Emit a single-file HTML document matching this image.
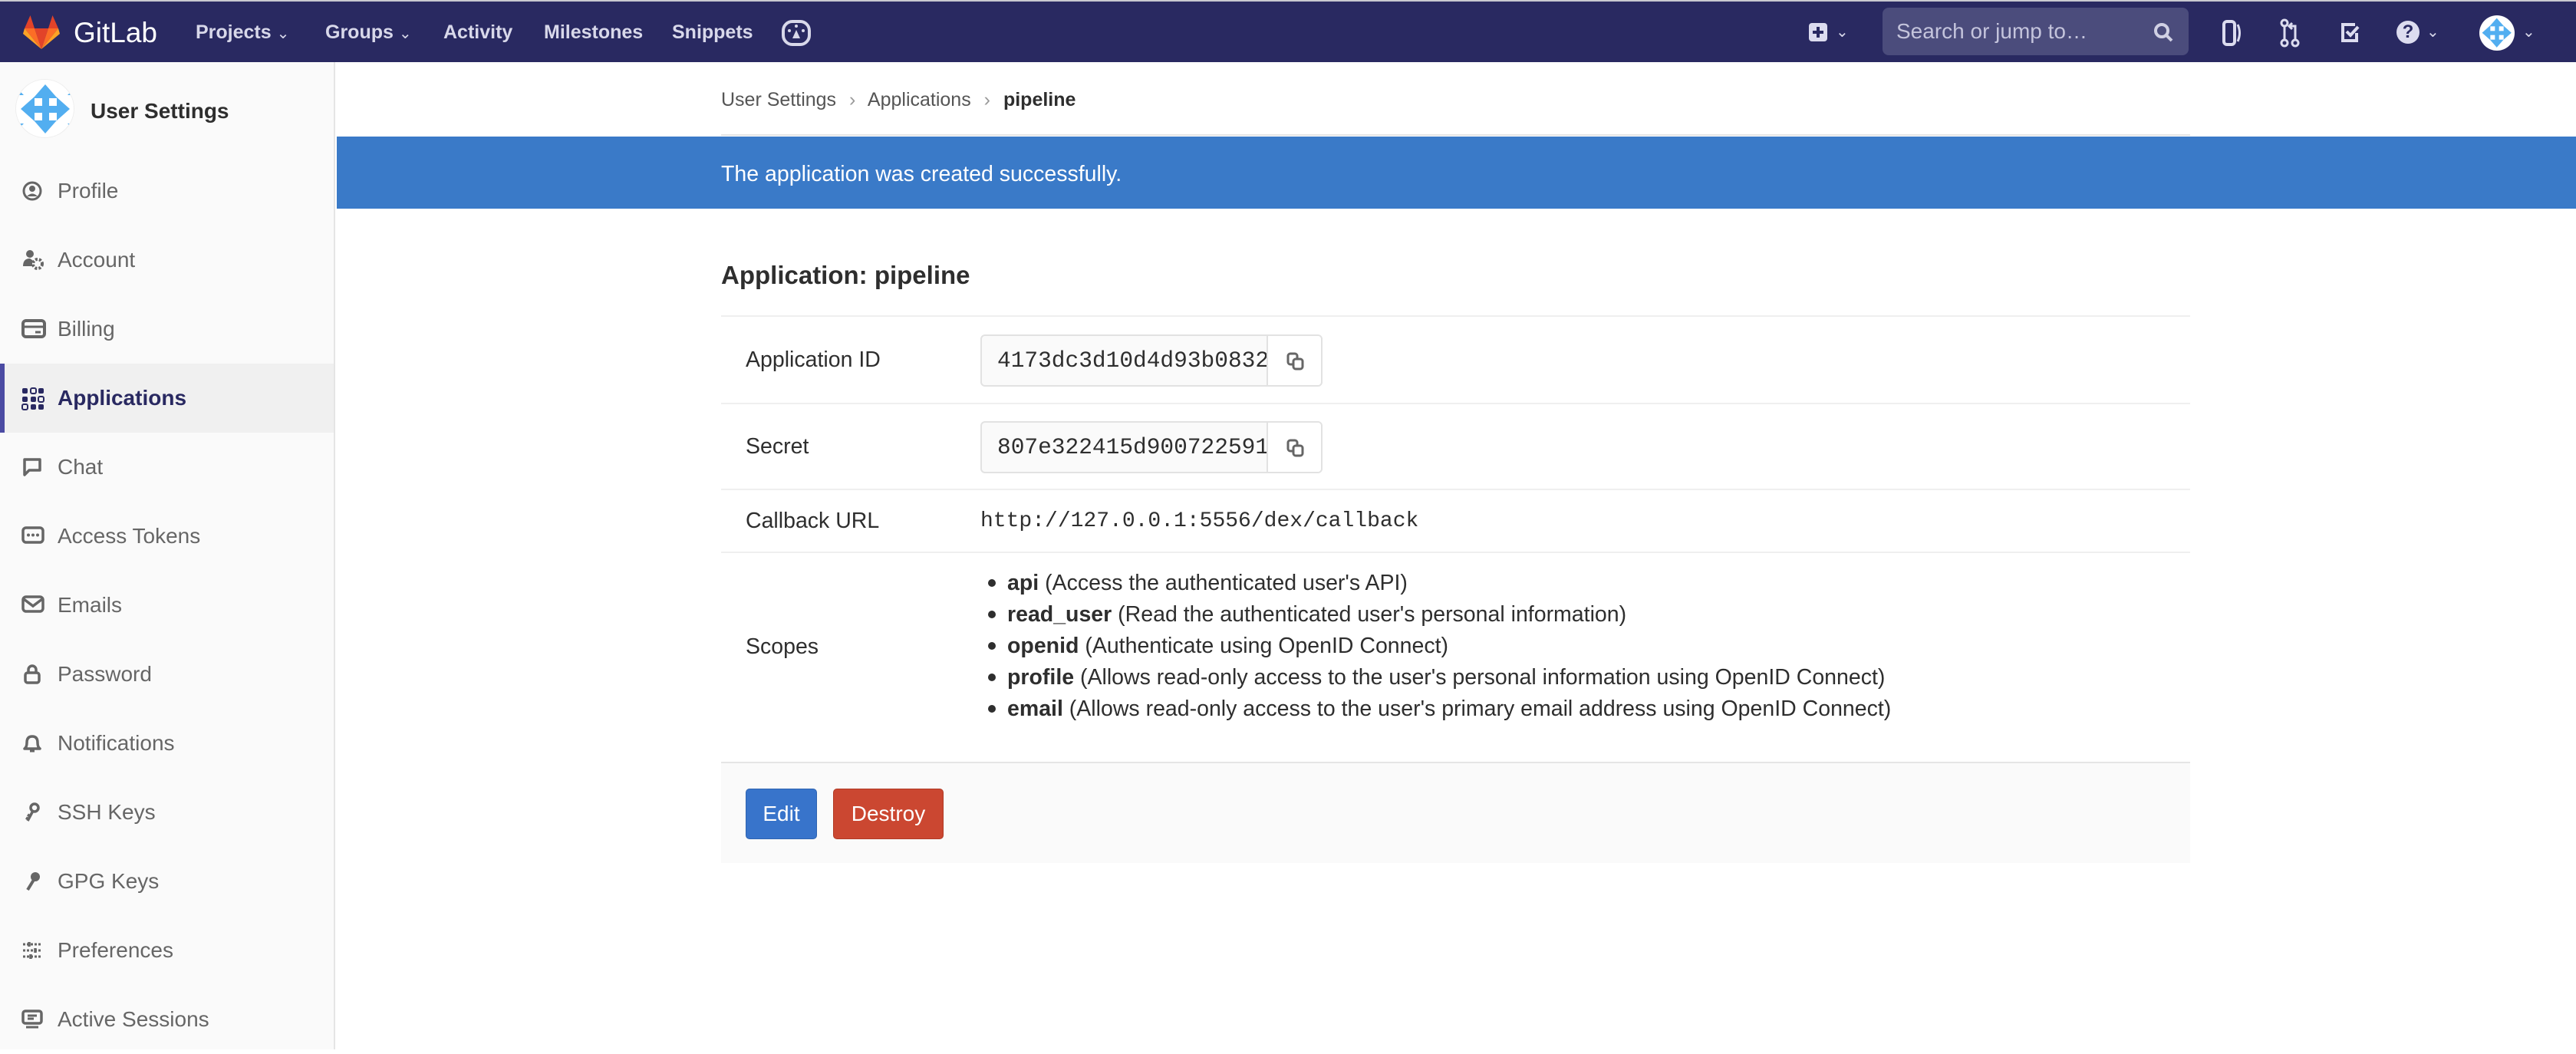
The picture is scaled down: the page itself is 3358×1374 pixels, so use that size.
<!DOCTYPE html>
<html><head><meta charset="utf-8"><style>
*{box-sizing:border-box;margin:0;padding:0}
body{width:3358px;height:1368px;overflow:hidden;background:#fff;font-family:"Liberation Sans",sans-serif;color:#2e2e2e;position:relative}
.abs{position:absolute}
.nav{left:0;top:0;width:3358px;height:81px;background:#292961;border-top:2px solid #c8c8d0}
.nl{position:absolute;top:0;height:81px;line-height:81px;color:#d8d8ea;font-weight:bold;font-size:25px}
.side{left:0;top:81px;width:437px;height:1287px;background:#fafafa;border-right:2px solid #e5e5e5}
.si{position:absolute;left:0;width:435px;height:90px;line-height:90px;font-size:28px;color:#666}
.si span{position:absolute;left:75px}
.si svg{position:absolute;left:28px;top:31px}
.si.act{background:#f0f0f0;color:#292961;font-weight:bold;border-left:6px solid #4b4ba3}
.si.act svg{left:22px}.si.act span{left:69px}
.row{position:absolute;left:940px;width:1915px;border-top:2px solid #efefef}
.lbl{position:absolute;left:32px;font-size:28.5px}
.inp{position:absolute;left:338px;width:446px;height:68px;border:2px solid #e2e2e2;border-radius:6px;background:#fafafa;overflow:hidden}
.inp .t{position:absolute;left:20px;top:0;line-height:64px;font-family:"Liberation Mono",monospace;font-size:29.5px;width:351px;overflow:hidden;white-space:nowrap}
.inp .b{position:absolute;left:371px;top:0;width:73px;height:64px;border-left:2px solid #e2e2e2;background:#fff}
.sc{position:absolute;left:1313px;font-size:28.5px;line-height:41px}
.sc li{list-style:none;position:relative}
.sc li:before{content:"";position:absolute;left:-25px;top:15px;width:10px;height:10px;border-radius:50%;background:#2e2e2e}
</style></head><body>
<div class="abs nav">
<svg class="abs" style="left:30px;top:18px" width="48" height="44" viewBox="0 0 48 44"><path d="M24 44 L15 17 H33Z" fill="#e24329"/><path d="M24 44 L15 17 H2Z" fill="#fc6d26"/><path d="M2 17 L0 24 L24 44Z" fill="#fca326"/><path d="M2 17 H15 L9.5 0Z" fill="#e24329"/><path d="M24 44 L33 17 H46Z" fill="#fc6d26"/><path d="M46 17 L48 24 L24 44Z" fill="#fca326"/><path d="M46 17 H33 L38.5 0Z" fill="#e24329"/></svg>
<div class="nl" style="left:96px;color:#fff;font-weight:normal;font-size:37px">GitLab</div>
<div class="nl" style="left:255px">Projects <span style="font-weight:normal;font-size:20px">&#8964;</span></div>
<div class="nl" style="left:424px">Groups <span style="font-weight:normal;font-size:20px">&#8964;</span></div>
<div class="nl" style="left:578px">Activity</div>
<div class="nl" style="left:709px">Milestones</div>
<div class="nl" style="left:876px">Snippets</div>
<svg class="abs" style="left:1019px;top:24px" width="38" height="34" viewBox="0 0 38 34"><rect x="2" y="2" width="34" height="30" rx="12" fill="none" stroke="#d8d8ea" stroke-width="4"/><path d="M14 24 L19 13 L24 24Z" fill="#d8d8ea"/><circle cx="10" cy="14" r="2" fill="#d8d8ea"/><circle cx="28" cy="14" r="2" fill="#d8d8ea"/><circle cx="19" cy="8" r="2" fill="#d8d8ea"/></svg>
<svg class="abs" style="left:2358px;top:28px" width="24" height="24"><rect width="24" height="24" rx="4" fill="#dcdcef"/><path d="M12 5V19M5 12H19" stroke="#292961" stroke-width="4"/></svg>
<div class="nl" style="left:2393px;font-weight:normal;font-size:20px">&#8964;</div>
<div class="abs" style="left:2454px;top:8px;width:399px;height:62px;background:#4b4c7c;border-radius:8px;color:#c4c4dc;font-size:28px;line-height:62px;padding-left:18px">Search or jump to…
<svg class="abs" style="right:20px;top:19px" width="26" height="26"><circle cx="11" cy="11" r="8" fill="none" stroke="#d0d0e4" stroke-width="4"/><path d="M17 17 L24 24" stroke="#d0d0e4" stroke-width="4"/></svg></div>
<svg class="abs" style="left:2897px;top:24px" width="26" height="34"><rect x="2" y="2" width="14" height="30" rx="4" fill="none" stroke="#dcdcef" stroke-width="4"/><path d="M20 6 Q25 17 20 28" stroke="#dcdcef" stroke-width="3" fill="none"/></svg>
<svg class="abs" style="left:2972px;top:22px" width="26" height="38"><circle cx="6" cy="6" r="4" fill="none" stroke="#dcdcef" stroke-width="3"/><circle cx="6" cy="32" r="4" fill="none" stroke="#dcdcef" stroke-width="3"/><circle cx="20" cy="32" r="4" fill="none" stroke="#dcdcef" stroke-width="3"/><path d="M6 10V28M20 28V10H13M16 6L12 10L16 14" stroke="#dcdcef" stroke-width="3" fill="none"/></svg>
<svg class="abs" style="left:3050px;top:27px" width="28" height="28"><path d="M20 3H4V24H22V14" stroke="#dcdcef" stroke-width="4" fill="none"/><path d="M9 12L14 17L24 6" stroke="#dcdcef" stroke-width="4" fill="none"/></svg>
<div class="abs" style="left:3124px;top:25px;width:30px;height:30px;border-radius:50%;background:#dcdcef;color:#292961;font-weight:bold;font-size:24px;line-height:30px;text-align:center">?</div>
<div class="nl" style="left:3163px;font-weight:normal;font-size:20px">&#8964;</div>
<div class="abs" style="left:3232px;top:18px;width:46px;height:46px;border-radius:50%;background:#fff;overflow:hidden"><svg width="46" height="46" viewBox="0 0 77 77"><path d="M38 6 L52 22 L70 38 L52 54 L38 70 L24 54 L6 38 L24 22Z" fill="#52aef0"/><rect x="24" y="24" width="10" height="10" fill="#fff"/><rect x="43" y="24" width="10" height="10" fill="#fff"/><rect x="24" y="43" width="10" height="10" fill="#fff"/><rect x="43" y="43" width="10" height="10" fill="#fff"/></svg></div>
<div class="nl" style="left:3288px;font-weight:normal;font-size:20px">&#8964;</div>
</div>

<div class="abs side">
<div class="abs" style="left:20px;top:22px;width:77px;height:77px;border-radius:50%;background:#fff;border:1px solid #eee;overflow:hidden"><svg width="77" height="77" viewBox="0 0 77 77"><path d="M38 6 L52 22 L70 38 L52 54 L38 70 L24 54 L6 38 L24 22Z" fill="#52aef0"/><path d="M0 10 L10 20 L0 20Z M77 10 L67 20 L77 20Z M0 67 L10 57 L0 57Z M77 67 L67 57 L77 57Z" fill="#52aef0"/><rect x="24" y="24" width="10" height="10" fill="#fff"/><rect x="43" y="24" width="10" height="10" fill="#fff"/><rect x="24" y="43" width="10" height="10" fill="#fff"/><rect x="43" y="43" width="10" height="10" fill="#fff"/></svg></div>
<div class="abs" style="left:118px;top:44px;line-height:40px;font-size:28px;font-weight:bold;color:#2e2e2e">User Settings</div>

<div class="si" style="top:123px"><svg width="28" height="28"><circle cx="14" cy="14" r="11" fill="none" stroke="#666" stroke-width="3"/><circle cx="14" cy="11" r="4" fill="#666"/><path d="M7 21 Q14 14 21 21" fill="#666"/></svg><span>Profile</span></div>
<div class="si" style="top:213px"><svg width="30" height="28"><circle cx="11" cy="6" r="5" fill="#666"/><path d="M2 22 Q2 12 11 12 L14 14 L14 22Z" fill="#666"/><circle cx="21" cy="19" r="6" fill="none" stroke="#666" stroke-width="4" stroke-dasharray="3 2"/></svg><span>Account</span></div>
<div class="si" style="top:303px"><svg width="32" height="28"><rect x="2" y="3" width="28" height="21" rx="4" fill="none" stroke="#666" stroke-width="4"/><path d="M2 11H30M18 18H25" stroke="#666" stroke-width="3"/></svg><span>Billing</span></div>
<div class="si act" style="top:393px"><svg width="30" height="30"><g fill="#292961"><rect x="1" y="1" width="7" height="7" rx="2"/><rect x="12" y="1" width="7" height="7" rx="2" fill="none" stroke="#292961" stroke-width="2"/><rect x="22" y="1" width="7" height="7" rx="2"/><rect x="1" y="12" width="7" height="7" rx="2"/><rect x="12" y="12" width="7" height="7" rx="2"/><rect x="22" y="12" width="7" height="7" rx="2" fill="none" stroke="#292961" stroke-width="2"/><rect x="1" y="22" width="7" height="7" rx="2" fill="none" stroke="#292961" stroke-width="2"/><rect x="12" y="22" width="7" height="7" rx="2"/><rect x="22" y="22" width="7" height="7" rx="2"/></g></svg><span>Applications</span></div>
<div class="si" style="top:483px"><svg width="28" height="28"><path d="M4 4H24V18H10L4 24Z" fill="none" stroke="#666" stroke-width="3.5" stroke-linejoin="round"/></svg><span>Chat</span></div>
<div class="si" style="top:573px"><svg width="30" height="26"><rect x="2" y="3" width="26" height="19" rx="4" fill="none" stroke="#666" stroke-width="3.5"/><circle cx="9" cy="12.5" r="2" fill="#666"/><circle cx="15" cy="12.5" r="2" fill="#666"/><circle cx="21" cy="12.5" r="2" fill="#666"/></svg><span>Access Tokens</span></div>
<div class="si" style="top:663px"><svg width="30" height="26"><rect x="2" y="3" width="26" height="19" rx="4" fill="none" stroke="#666" stroke-width="3.5"/><path d="M3 6L15 15L27 6" fill="none" stroke="#666" stroke-width="3.5"/></svg><span>Emails</span></div>
<div class="si" style="top:753px"><svg width="28" height="28"><path d="M9 12V8a5 5 0 0 1 10 0V12" fill="none" stroke="#666" stroke-width="3.5"/><rect x="5" y="12" width="18" height="13" rx="3" fill="none" stroke="#666" stroke-width="3.5"/></svg><span>Password</span></div>
<div class="si" style="top:843px"><svg width="28" height="28"><path d="M4 21 Q7 19 7 13 Q7 5 14 5 Q21 5 21 13 Q21 19 24 21Z" fill="none" stroke="#666" stroke-width="3.5" stroke-linejoin="round"/><path d="M11 24H17" stroke="#666" stroke-width="3"/></svg><span>Notifications</span></div>
<div class="si" style="top:933px"><svg width="28" height="28"><circle cx="17" cy="8" r="5" fill="none" stroke="#666" stroke-width="3.5"/><path d="M15 12L8 25M11 19L8 17M9 23L6 21" stroke="#666" stroke-width="3.5"/></svg><span>SSH Keys</span></div>
<div class="si" style="top:1023px"><svg width="28" height="28"><circle cx="18" cy="8" r="6" fill="#666"/><path d="M16 12L8 25" stroke="#666" stroke-width="4"/></svg><span>GPG Keys</span></div>
<div class="si" style="top:1113px"><svg width="28" height="28"><path d="M2 6H26M2 14H26M2 22H26" stroke="#666" stroke-width="3" stroke-dasharray="3 2"/><path d="M10 3V9M18 11V17M12 19V25" stroke="#666" stroke-width="3.5"/></svg><span>Preferences</span></div>
<div class="si" style="top:1203px"><svg width="28" height="28"><rect x="2" y="3" width="24" height="16" rx="3" fill="none" stroke="#666" stroke-width="3.5"/><path d="M8 9H20M8 13H16M6 24H22" stroke="#666" stroke-width="3"/></svg><span>Active Sessions</span></div>
</div>

<div class="abs" style="left:940px;top:110px;font-size:25px;line-height:40px;color:#555">User Settings <span style="color:#999;padding:0 10px">›</span> Applications <span style="color:#999;padding:0 10px">›</span> <b style="color:#2e2e2e">pipeline</b></div>
<div class="abs" style="left:940px;top:175px;width:1915px;height:2px;background:#e5e5e5"></div>
<div class="abs" style="left:439px;top:178px;width:2919px;height:94px;background:#3a7ac8"></div>
<div class="abs" style="left:940px;top:180px;line-height:94px;font-size:28.5px;color:#fff">The application was created successfully.</div>

<div class="abs" style="left:940px;top:337px;font-size:33px;font-weight:bold;line-height:44px">Application: pipeline</div>

<div class="row" style="top:411px;height:114px"><div class="lbl" style="top:0;line-height:112px">Application ID</div>
<div class="inp" style="top:23px"><div class="t">4173dc3d10d4d93b0832c1f5a7e</div><div class="b"><svg style="margin:21px 0 0 24px" width="24" height="24"><rect x="2" y="2" width="12" height="14" rx="3" fill="none" stroke="#666" stroke-width="3"/><rect x="9" y="9" width="12" height="13" rx="3" fill="#fff" stroke="#666" stroke-width="3"/></svg></div></div></div>
<div class="row" style="top:525px;height:112px"><div class="lbl" style="top:0;line-height:110px">Secret</div>
<div class="inp" style="top:22px"><div class="t">807e322415d900722591a2b3c4d</div><div class="b"><svg style="margin:21px 0 0 24px" width="24" height="24"><rect x="2" y="2" width="12" height="14" rx="3" fill="none" stroke="#666" stroke-width="3"/><rect x="9" y="9" width="12" height="13" rx="3" fill="#fff" stroke="#666" stroke-width="3"/></svg></div></div></div>
<div class="row" style="top:637px;height:82px"><div class="lbl" style="top:0;line-height:80px">Callback URL</div>
<div class="abs" style="left:338px;top:1px;line-height:80px;font-family:'Liberation Mono',monospace;font-size:28px">http://127.0.0.1:5556/dex/callback</div></div>
<div class="row" style="top:719px;height:276px"><div class="lbl" style="top:0;line-height:244px">Scopes</div></div>
<ul class="sc" style="top:740px">
<li><b>api</b> (Access the authenticated user's API)</li>
<li><b>read_user</b> (Read the authenticated user's personal information)</li>
<li><b>openid</b> (Authenticate using OpenID Connect)</li>
<li><b>profile</b> (Allows read-only access to the user's personal information using OpenID Connect)</li>
<li><b>email</b> (Allows read-only access to the user's primary email address using OpenID Connect)</li>
</ul>
<div class="abs" style="left:940px;top:993px;width:1915px;height:132px;background:#fafafa;border-top:2px solid #e5e5e5"></div>
<div class="abs" style="left:972px;top:1028px;width:93px;height:66px;background:#3874cb;border:1px solid #2e63b0;border-radius:5px;color:#fff;font-size:28px;line-height:64px;text-align:center">Edit</div>
<div class="abs" style="left:1086px;top:1028px;width:144px;height:66px;background:#cb4731;border:1px solid #b03a25;border-radius:5px;color:#fff;font-size:28px;line-height:64px;text-align:center">Destroy</div>
</body></html>
